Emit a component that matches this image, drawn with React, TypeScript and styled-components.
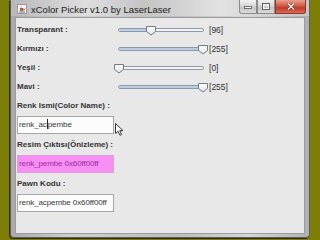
import styled, { createGlobalStyle } from 'styled-components';

const Global = createGlobalStyle`
  html, body {
    margin: 0;
    padding: 0;
    background: #7e7d05;
    width: 320px;
    height: 240px;
    overflow: hidden;
  }
`;

const Desk = styled.div`
  width: 320px;
  height: 240px;
  position: relative;
  background: #7e7d05;
`;

const Window = styled.div`
  margin-left: 10px;
  width: 300px;
  height: 238px;
  box-sizing: border-box;
  border: 1px solid #5e5e5e;
  border-top: none;
  border-radius: 0 0 4px 4px;
  background: linear-gradient(90deg, #a9a9a9 0%, #cfcfcf 20%, #bdbdbd 55%, #d6d6d6 80%, #b0b0b0 100%);
  display: flex;
  flex-direction: column;
  box-shadow: -1px 1px 0 #2e2e1a;
`;

const TitleBar = styled.div`
  height: 16px;
  display: flex;
  align-items: center;
  padding-left: 6px;
  background: linear-gradient(90deg, #b8b8b8 0%, #dedede 25%, #c4c4c4 45%, #e2e2e2 70%, #c6c6c6 100%);
`;

const AppIcon = styled.div`
  width: 10px;
  height: 10px;
  margin-top: 2px;
  box-sizing: border-box;
  border: 1px solid #9a9a9a;
  background: #f4f4f4;
  display: flex;
  align-items: flex-end;
  justify-content: center;
`;

const Title = styled.span`
  margin-left: 4px;
  margin-top: 2px;
  font-family: 'Liberation Sans', Arial, sans-serif;
  font-size: 9.5px;
  color: #1c1c1c;
  flex: 1;
  white-space: nowrap;
`;

const Controls = styled.div`
  display: flex;
  align-self: flex-start;
  margin-right: 3px;
`;

const CtrlButton = styled.div<{ $close?: boolean; $w: number }>`
  width: ${(p) => p.$w}px;
  height: 14px;
  box-sizing: border-box;
  border: 1px solid ${(p) => (p.$close ? '#8a3a30' : '#8a8a8a')};
  border-top: none;
  background: ${(p) =>
    p.$close
      ? 'linear-gradient(180deg, #e8a090 0%, #d25a46 45%, #c23a28 60%, #d86a50 100%)'
      : 'linear-gradient(180deg, #f0f0f0 0%, #d8d8d8 45%, #c4c4c4 60%, #dcdcdc 100%)'};
  display: flex;
  align-items: center;
  justify-content: center;
  &:first-child {
    border-radius: 0 0 0 3px;
  }
  &:last-child {
    border-radius: 0 0 3px 0;
  }
`;

const Content = styled.div`
  margin: 1px 4px 3px 4px;
  flex: 1;
  background: #e8e8e8;
  border: 1px solid #9c9c9c;
  padding-top: 2px;
  padding-left: 1px;
  display: flex;
  flex-direction: column;
  position: relative;
`;

const SliderRow = styled.div`
  height: 19px;
  display: grid;
  grid-template-columns: 101px 86px auto;
  align-items: center;
`;

const Label = styled.div`
  font-family: 'Liberation Sans', Arial, sans-serif;
  font-weight: bold;
  font-size: 8px;
  color: #333;
  white-space: nowrap;
`;

const Track = styled.div`
  position: relative;
  height: 4px;
  box-sizing: border-box;
  border: 1px solid #8f9aa6;
  border-radius: 2px;
  background: #f2f4f6;
`;

const Fill = styled.div`
  height: 100%;
  background: #b9cde4;
  border-radius: 2px;
`;

const Thumb = styled.svg`
  position: absolute;
  top: -4px;
  margin-left: -6px;
`;

const Value = styled.span`
  margin-left: 5px;
  font-family: 'Liberation Sans', Arial, sans-serif;
  font-size: 8.5px;
  color: #333;
`;

const FieldLabel = styled(Label)`
  height: 20px;
  line-height: 20px;
`;

const Field = styled.div<{ $preview?: boolean }>`
  width: 97px;
  height: 18px;
  margin-bottom: 1px;
  box-sizing: border-box;
  border: 1px solid ${(p) => (p.$preview ? '#e0a0e0' : '#a6a6a6')};
  background: ${(p) => (p.$preview ? '#f68ef4' : '#fcfcfc')};
  color: ${(p) => (p.$preview ? '#a02aa6' : '#3a3a3a')};
  font-family: 'Liberation Sans', Arial, sans-serif;
  font-size: 8px;
  letter-spacing: -0.1px;
  line-height: 16px;
  padding-left: 1px;
  white-space: nowrap;
  overflow: hidden;
`;

const Caret = styled.span`
  display: inline-block;
  width: 1px;
  height: 10px;
  background: #222;
  vertical-align: -2px;
`;

const Pointer = styled.svg`
  position: absolute;
  left: 99px;
  top: 105px;
`;

const sliders = [
  { label: 'Transparant :', value: 96 },
  { label: 'Kırmızı :', value: 255 },
  { label: 'Yeşil :', value: 0 },
  { label: 'Mavi :', value: 255 },
];

function Slider({ value }: { value: number }) {
  const pct = (value / 255) * 100;
  return (
    <Track>
      <Fill style={{ width: `${pct}%` }} />
      <Thumb width="12" height="11" viewBox="0 0 12 11" style={{ left: `${pct}%` }}>
        <defs>
          <linearGradient id="tg" x1="0" y1="0" x2="0" y2="1">
            <stop offset="0" stopColor="#ffffff" />
            <stop offset="1" stopColor="#dfe3e8" />
          </linearGradient>
        </defs>
        <path d="M1.5 1.5 H10.5 V6.5 L6 10 L1.5 6.5 Z" fill="url(#tg)" stroke="#6f7b88" strokeWidth="1" />
      </Thumb>
    </Track>
  );
}

export default function App() {
  return (
    <Desk>
      <Global />
      <Window>
        <TitleBar>
          <AppIcon>
            <svg width="8" height="8" viewBox="0 0 8 8">
              <path d="M2 3 H5 V6 H2 Z" fill="#c65a28" />
              <path d="M5 4 H6.5 V5 H5" fill="none" stroke="#c65a28" strokeWidth="0.8" />
              <path d="M1 7 H7" stroke="#4a6fb0" strokeWidth="1" />
              <path d="M3 1 Q4 2 3 2.5" stroke="#4a6fb0" strokeWidth="0.6" fill="none" />
            </svg>
          </AppIcon>
          <Title>xColor Picker v1.0 by LaserLaser</Title>
          <Controls>
            <CtrlButton $w={18}>
              <svg width="8" height="4" viewBox="0 0 8 4">
                <rect x="0.5" y="1.5" width="7" height="2" fill="#fff" stroke="#555" strokeWidth="0.8" />
              </svg>
            </CtrlButton>
            <CtrlButton $w={18}>
              <svg width="8" height="7" viewBox="0 0 8 7">
                <rect x="0.5" y="0.5" width="7" height="6" fill="none" stroke="#555" strokeWidth="0.9" />
                <rect x="1.5" y="1.8" width="5" height="3.8" fill="none" stroke="#fff" strokeWidth="0.8" />
              </svg>
            </CtrlButton>
            <CtrlButton $w={31} $close>
              <svg width="8" height="7" viewBox="0 0 8 7">
                <path d="M1 0.5 L7 6.5 M7 0.5 L1 6.5" stroke="#5a1a10" strokeWidth="2.2" />
                <path d="M1 0.5 L7 6.5 M7 0.5 L1 6.5" stroke="#fff" strokeWidth="1.4" />
              </svg>
            </CtrlButton>
          </Controls>
        </TitleBar>
        <Content>
          {sliders.map((s) => (
            <SliderRow key={s.label}>
              <Label>{s.label}</Label>
              <Slider value={s.value} />
              <Value>[{s.value}]</Value>
            </SliderRow>
          ))}
          <FieldLabel>Renk Ismi(Color Name) :</FieldLabel>
          <Field>
            renk_ac<Caret />pembe
          </Field>
          <FieldLabel>Resim Çıktısı(Önizleme) :</FieldLabel>
          <Field $preview>renk_pembe 0x60ff00ff</Field>
          <FieldLabel>Pawn Kodu :</FieldLabel>
          <Field>renk_acpembe 0x60ff00ff</Field>
          <Pointer width="9" height="13" viewBox="0 0 9 13">
            <path d="M0.5 0.5 V10.5 L3 8.3 L5 12.3 L6.6 11.5 L4.7 7.6 H8 Z" fill="#fff" stroke="#222" strokeWidth="0.9" strokeLinejoin="round" />
          </Pointer>
        </Content>
      </Window>
    </Desk>
  );
}
